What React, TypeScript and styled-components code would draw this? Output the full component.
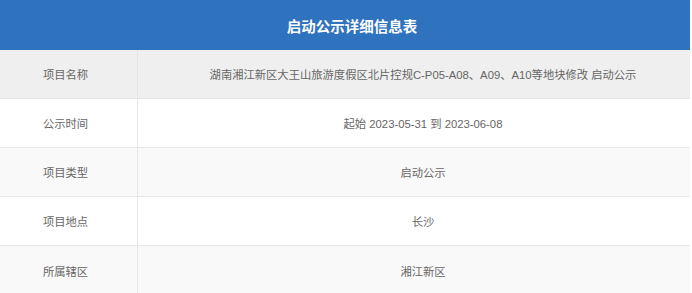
import React from "react";
import styled, { createGlobalStyle } from "styled-components";

const Global = createGlobalStyle`
  html, body { margin: 0; padding: 0; background: #ffffff; }
  body { font-family: "Liberation Sans", "Noto Sans CJK SC", sans-serif; }
`;

const Table = styled.div`
  width: 690px;
  display: flex;
  flex-direction: column;
`;

const Header = styled.div`
  height: 50px;
  background: #2f72bd;
  color: #ffffff;
  font-weight: bold;
  font-size: 14.5px;
  display: flex;
  align-items: center;
  justify-content: center;
  padding-left: 14px;
  box-sizing: border-box;
`;

const Row = styled.div<{ $bg: string }>`
  display: grid;
  grid-template-columns: 138px 1fr;
  height: 49px;
  background: ${(p) => p.$bg};
  border-bottom: 1.5px solid #e6e6e6;
  box-sizing: border-box;
  &:last-child { border-bottom: none; }
`;

const Label = styled.div`
  display: flex;
  align-items: center;
  justify-content: center;
  padding-right: 6px;
  border-right: 1.5px solid #e6e6e6;
  font-size: 11.3px;
  color: #666666;
`;

const Value = styled.div`
  display: flex;
  align-items: center;
  justify-content: center;
  padding-left: 18px;
  font-size: 11.3px;
  color: #666666;
  white-space: nowrap;
`;

const rows: [string, string, string][] = [
  ["项目名称", "湖南湘江新区大王山旅游度假区北片控规C-P05-A08、A09、A10等地块修改 启动公示", "#efefef"],
  ["公示时间", "起始 2023-05-31 到 2023-06-08", "#ffffff"],
  ["项目类型", "启动公示", "#f9f9f9"],
  ["项目地点", "长沙", "#ffffff"],
  ["所属辖区", "湘江新区", "#f9f9f9"],
];

export default function App() {
  return (
    <>
      <Global />
      <Table>
        <Header>启动公示详细信息表</Header>
        {rows.map(([l, v, bg]) => (
          <Row key={l} $bg={bg}>
            <Label>{l}</Label>
            <Value>{v}</Value>
          </Row>
        ))}
      </Table>
    </>
  );
}
